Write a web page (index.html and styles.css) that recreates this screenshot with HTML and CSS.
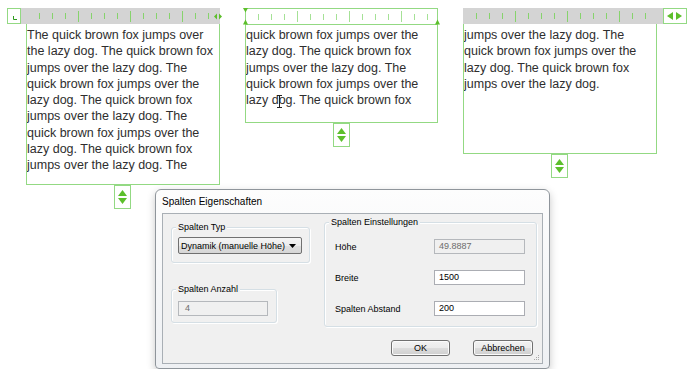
FILE: index.html
```html
<!DOCTYPE html>
<html lang="de">
<head>
    <meta charset="UTF-8">
    <meta name="viewport" content="width=device-width, initial-scale=1.0">
    <title>Spalten Eigenschaften</title>
    <link rel="stylesheet" href="styles.css">
</head>
<body>

    <div class="board">
        <!-- column 1: ruler with corner box -->
        <div class="panel panel-a">
            <div class="ruler">
                <div class="corner">
                    <svg width="4" height="4" viewBox="0 0 4 4"><path d="M0.5 0V3.5H4" fill="none" stroke="#2e9b1c"/></svg>
                </div>
                <div class="bar bar-a">
                    <div class="ticks ticks-a"></div>
                    <svg class="mini-arrows" width="8" height="7" viewBox="0 0 8 7">
                        <polygon points="0,3.5 3,0.5 3,6.5" fill="#5cbf2b"/>
                        <polygon points="5,0.5 8,3.5 5,6.5" fill="#5cbf2b"/>
                    </svg>
                </div>
            </div>
            <div class="page page-a">
                The quick brown fox jumps over<br>
                the lazy dog. The quick brown fox<br>
                jumps over the lazy dog. The<br>
                quick brown fox jumps over the<br>
                lazy dog. The quick brown fox<br>
                jumps over the lazy dog. The<br>
                quick brown fox jumps over the<br>
                lazy dog. The quick brown fox<br>
                jumps over the lazy dog. The
            </div>
            <div class="spin spin-a">
                <svg width="15" height="22" viewBox="0 0 15 22">
                    <polygon points="3,10 7.5,4 12,10" fill="#5cbf2b"/>
                    <polygon points="3,12 12,12 7.5,18" fill="#5cbf2b"/>
                </svg>
            </div>
        </div>

        <!-- column 2: boxed ruler with indent markers -->
        <div class="panel panel-b">
            <div class="ruler-box">
                <div class="ticks ticks-b"></div>
                <svg class="markers" width="200" height="17" viewBox="0 0 200 17">
                    <polygon points="1,0 6,0 3.5,4.5" fill="#5cbf2b"/>
                    <polygon points="1,16.5 6,16.5 3.5,11.5" fill="#5cbf2b"/>
                    <polygon points="193,16.5 198,16.5 195.5,11.5" fill="#5cbf2b"/>
                </svg>
            </div>
            <div class="page page-b">
                quick brown fox jumps over the<br>
                lazy dog. The quick brown fox<br>
                jumps over the lazy dog. The<br>
                quick brown fox jumps over the<br>
                lazy dog. The quick brown fox
                <svg class="ibeam" width="7" height="13" viewBox="0 0 7 13">
                    <path d="M1 0.5H6M3.5 0.5V12.5M1 12.5H6" fill="none" stroke="#222"/>
                </svg>
            </div>
            <div class="spin">
                <svg width="15" height="22" viewBox="0 0 15 22">
                    <polygon points="3,10 7.5,4 12,10" fill="#5cbf2b"/>
                    <polygon points="3,12 12,12 7.5,18" fill="#5cbf2b"/>
                </svg>
            </div>
        </div>

        <!-- column 3: ruler with arrow box -->
        <div class="panel panel-c">
            <div class="ruler">
                <div class="bar bar-c">
                    <div class="ticks ticks-c"></div>
                </div>
                <div class="arrow-box">
                    <svg width="22" height="14" viewBox="0 0 22 14">
                        <polygon points="3,7 9,3 9,11" fill="#5cbf2b"/>
                        <polygon points="12,3 18,7 12,11" fill="#5cbf2b"/>
                    </svg>
                </div>
            </div>
            <div class="page page-c">
                jumps over the lazy dog. The<br>
                quick brown fox jumps over the<br>
                lazy dog. The quick brown fox<br>
                jumps over the lazy dog.
            </div>
            <div class="spin">
                <svg width="15" height="22" viewBox="0 0 15 22">
                    <polygon points="3,10 7.5,4 12,10" fill="#5cbf2b"/>
                    <polygon points="3,12 12,12 7.5,18" fill="#5cbf2b"/>
                </svg>
            </div>
        </div>
    </div>

    <div class="dialog">
        <div class="dialog-title">Spalten Eigenschaften</div>
        <div class="dialog-client">
            <div class="dialog-grid">
                <div class="col-left">
                    <div class="group group-type">
                        <span class="group-title">Spalten Typ</span>
                        <div class="combo">
                            <span>Dynamik (manuelle Höhe)</span>
                            <svg class="caret" width="7" height="4" viewBox="0 0 7 4"><polygon points="0,0 7,0 3.5,4" fill="#000"/></svg>
                        </div>
                    </div>
                    <div class="group group-count">
                        <span class="group-title">Spalten Anzahl</span>
                        <div class="field field-count disabled">4</div>
                    </div>
                </div>
                <div class="group group-settings">
                    <span class="group-title">Spalten Einstellungen</span>
                    <div class="row">
                        <span class="row-label">Höhe</span>
                        <div class="field disabled">49.8887</div>
                    </div>
                    <div class="row">
                        <span class="row-label">Breite</span>
                        <div class="field">1500</div>
                    </div>
                    <div class="row">
                        <span class="row-label">Spalten Abstand</span>
                        <div class="field">200</div>
                    </div>
                </div>
            </div>
            <div class="actions">
                <button class="btn btn-ok">OK</button>
                <button class="btn">Abbrechen</button>
            </div>
            <svg class="grip" width="6" height="6" viewBox="0 0 6 6">
                <rect x="4" y="0" width="1" height="1" fill="#a8a8a8"/>
                <rect x="2" y="2" width="1" height="1" fill="#a8a8a8"/>
                <rect x="4" y="2" width="1" height="1" fill="#a8a8a8"/>
                <rect x="0" y="4" width="1" height="1" fill="#a8a8a8"/>
                <rect x="2" y="4" width="1" height="1" fill="#a8a8a8"/>
                <rect x="4" y="4" width="1" height="1" fill="#a8a8a8"/>
            </svg>
        </div>
    </div>

</body>
</html>
```

FILE: styles.css
```css
body {
    margin: 0;
    font-family: "Liberation Sans", Arial, sans-serif;
    background-color: #fff;
}

/* top row with the three text frames */
.board {
    display: flex;
    align-items: flex-start;
    height: 189px;
    box-sizing: border-box;
    padding: 8px 0 0 7px;
}

.panel {
    display: flex;
    flex-direction: column;
}

.panel-a {
    width: 215px;
}

.panel-b {
    width: 193px;
    margin-left: 23px;
}

.panel-c {
    width: 224px;
    margin-left: 25px;
}

.ruler {
    display: flex;
    height: 16px;
}

.corner {
    width: 14px;
    height: 16px;
    box-sizing: border-box;
    border: 1px solid #93d983;
    background-color: #fff;
    display: flex;
    align-items: center;
    justify-content: center;
    padding: 3px 0 0 1px;
}

.bar {
    background-color: #d4d4d4;
    display: flex;
    align-items: center;
    height: 16px;
}

.bar-a {
    width: 199px;
}

.bar-c {
    width: 200px;
}

.ticks {
    height: 100%;
    width: 177px;
    background-image:
        linear-gradient(to right, #86d36c 1px, transparent 1px),
        linear-gradient(to right, #86d36c 1px, transparent 1px);
    background-size: 13px 6px, 52px 11px;
    background-position: 7px center, 46px center;
    background-repeat: repeat-x;
}

.ticks-a {
    margin-left: 11px;
}

.ticks-b {
    margin-left: 5px;
    background-image:
        linear-gradient(to right, #a5e196 1px, transparent 1px),
        linear-gradient(to right, #a5e196 1px, transparent 1px);
}

.ticks-c {
    margin-left: 6px;
}

.mini-arrows {
    margin-left: auto;
    margin-right: -2px;
}

.ruler-box {
    position: relative;
    display: flex;
    height: 17px;
    box-sizing: border-box;
    border: 1px solid #93d983;
    background-color: #fff;
}

.markers {
    position: absolute;
    left: -4px;
    top: -1px;
    overflow: visible;
}

.arrow-box {
    width: 24px;
    height: 16px;
    box-sizing: border-box;
    border: 1px solid #93d983;
    background-color: #fff;
    display: flex;
    align-items: center;
}

.page {
    box-sizing: border-box;
    border: 1px solid #93d983;
    border-top: none;
    background-color: #fff;
    padding-top: 3px;
    font-size: 12.5px;
    line-height: 16.3px;
    color: #2e2e2e;
    white-space: nowrap;
    overflow: hidden;
}

.page-a {
    width: 194px;
    height: 161px;
    margin-left: 19px;
}

.page-b {
    position: relative;
    width: 193px;
    height: 98px;
    padding-top: 2px;
}

.page-c {
    width: 194px;
    height: 130px;
}

.ibeam {
    position: absolute;
    left: 30px;
    top: 70px;
}

.spin {
    width: 17px;
    height: 24px;
    box-sizing: border-box;
    border: 1px solid #93d983;
    background-color: #fff;
    margin-left: 88px;
}

.spin-a {
    margin-left: 107px;
}

/* dialog window */
.dialog {
    margin-left: 155px;
    width: 395px;
    height: 180px;
    box-sizing: border-box;
    border: 1px solid #8f959b;
    border-radius: 6px 6px 4px 4px;
    background: linear-gradient(#fdfdfd, #eef0f3);
    box-shadow: 0 3px 8px rgba(0, 0, 0, 0.22);
    padding: 0 6px 4px;
    display: flex;
    flex-direction: column;
    font-size: 9px;
    color: #000;
}

.dialog-title {
    height: 23px;
    line-height: 23px;
    font-size: 10px;
}

.dialog-client {
    position: relative;
    flex: 1;
    border: 1px solid #a9afb5;
    background-color: #f0f0f0;
}

.dialog-grid {
    display: grid;
    grid-template-columns: 139px 213px;
    column-gap: 14px;
    padding: 8px 0 0 8px;
}

.col-left {
    padding-top: 5px;
}

.group {
    position: relative;
    box-sizing: border-box;
    border: 1px solid #d5dfe5;
    border-radius: 3px;
    box-shadow: inset 1px 1px #fff, 1px 1px #fff;
}

.group-type {
    height: 36px;
    padding: 9px 0 0 6px;
}

.group-count {
    width: 106px;
    height: 34px;
    margin-top: 26px;
    padding: 11px 0 0 6px;
}

.group-settings {
    height: 105px;
    padding: 16px 0 0 10px;
}

.group-title {
    position: absolute;
    top: -6px;
    left: 4px;
    padding: 0 2px;
    background-color: #f0f0f0;
    line-height: 11px;
}

.combo {
    width: 124px;
    height: 17px;
    box-sizing: border-box;
    border: 1px solid #707070;
    border-radius: 2px;
    background: linear-gradient(#f4f4f4, #ececec 50%, #e0e0e0 50%, #d6d6d6);
    display: flex;
    align-items: center;
    padding-left: 2px;
}

.caret {
    margin-left: auto;
    margin-right: 5px;
}

.row {
    display: flex;
    align-items: center;
    height: 15px;
}

.row + .row {
    margin-top: 16px;
}

.row-label {
    width: 99px;
}

.field {
    width: 91px;
    height: 15px;
    box-sizing: border-box;
    border: 1px solid #abadb3;
    background-color: #fff;
    padding-left: 4px;
    line-height: 13px;
}

.field.disabled {
    background-color: #f0f0f0;
    border-color: #b5b8bc;
    color: #6d6d6d;
}

.field-count {
    width: 90px;
    padding-left: 6px;
}

.actions {
    display: flex;
    justify-content: flex-end;
    gap: 23px;
    padding-right: 9px;
    margin-top: 13px;
}

.btn {
    width: 60px;
    height: 16px;
    padding: 0;
    border: 1px solid #707070;
    border-radius: 3px;
    background: linear-gradient(#f2f2f2, #ebebeb 50%, #dddddd 50%, #cfcfcf);
    box-shadow: inset 0 0 0 1px #fbfbfb;
    font-family: inherit;
    font-size: 9px;
    color: #000;
}

.btn-ok {
    width: 59px;
}

.grip {
    position: absolute;
    right: 2px;
    bottom: 2px;
}
```
